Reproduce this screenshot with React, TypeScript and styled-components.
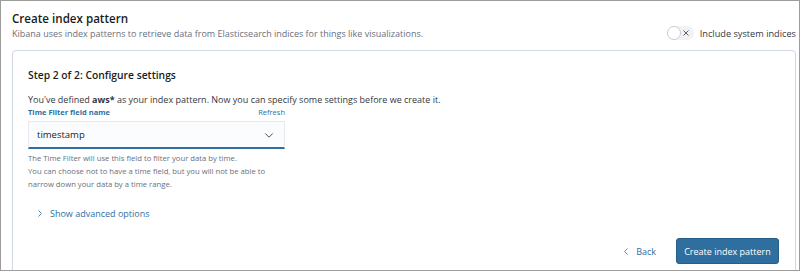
import styled, { createGlobalStyle } from "styled-components";

const GlobalStyle = createGlobalStyle`
  html, body {
    margin: 0;
    padding: 0;
    background: #ffffff;
  }
  body {
    font-family: "Open Sans", "Liberation Sans", sans-serif;
    color: #343741;
  }
`;

const ChevronDown = () => (
  <svg width="10" height="10" viewBox="0 0 16 16" fill="none">
    <path d="M2 5.5l6 6 6-6" stroke="#343741" strokeWidth="1.4" />
  </svg>
);

const ChevronSide = ({ left }: { left?: boolean }) => (
  <svg width="8" height="9" viewBox="0 0 16 16" fill="none">
    <path
      d={left ? "M11 2L5 8l6 6" : "M5 2l6 6-6 6"}
      stroke="#2f6f9f"
      strokeWidth="1.6"
    />
  </svg>
);

const CrossIcon = () => (
  <svg width="8" height="8" viewBox="0 0 16 16" fill="none">
    <path d="M3 3l10 10M13 3L3 13" stroke="#343741" strokeWidth="1.6" />
  </svg>
);

export default function App() {
  return (
    <>
      <GlobalStyle />
      <Frame>
        <Header>
          <div>
            <Title>Create index pattern</Title>
            <Subtitle>
              Kibana uses index patterns to retrieve data from Elasticsearch
              indices for things like visualizations.
            </Subtitle>
          </div>
          <SwitchRow>
            <Switch>
              <Knob />
              <CrossIcon />
            </Switch>
            <SwitchLabel>Include system indices</SwitchLabel>
          </SwitchRow>
        </Header>

        <Panel>
          <StepTitle>Step 2 of 2: Configure settings</StepTitle>
          <Description>
            You've defined <b>aws*</b> as your index pattern. Now you can
            specify some settings before we create it.
          </Description>
          <Field>
            <LabelRow>
              <FieldLabel>Time Filter field name</FieldLabel>
              <LinkText>Refresh</LinkText>
            </LabelRow>
            <Select>
              <span>timestamp</span>
              <ChevronDown />
            </Select>
            <HelpText>
              The Time Filter will use this field to filter your data by time.
              <br />
              You can choose not to have a time field, but you will not be able
              to
              <br />
              narrow down your data by a time range.
            </HelpText>
          </Field>
          <Advanced>
            <ChevronSide />
            Show advanced options
          </Advanced>
          <Actions>
            <BackButton>
              <ChevronSide left />
              Back
            </BackButton>
            <PrimaryButton>Create index pattern</PrimaryButton>
          </Actions>
        </Panel>
      </Frame>
    </>
  );
}

const Frame = styled.div`
  width: 800px;
  height: 271px;
  box-sizing: border-box;
  border: 1px solid #9c9c9c;
  padding: 10px 3px 0 11px;
  overflow: hidden;
`;

const Header = styled.div`
  display: flex;
  justify-content: space-between;
  align-items: flex-end;
  margin-bottom: 9px;
`;

const Title = styled.h1`
  margin: 0;
  font-size: 11.6px;
  font-weight: 600;
  line-height: 16px;
  color: #1a1c21;
`;

const Subtitle = styled.p`
  margin: 0;
  font-size: 9px;
  line-height: 14px;
  color: #69707d;
`;

const SwitchRow = styled.div`
  display: flex;
  align-items: center;
  gap: 6px;
  margin-bottom: 1px;
`;

const Switch = styled.div`
  width: 27px;
  height: 14px;
  border-radius: 8px;
  background: #f1f2f4;
  display: flex;
  align-items: center;
  justify-content: space-between;
  padding-right: 4px;
  box-sizing: border-box;
`;

const Knob = styled.div`
  width: 14px;
  height: 14px;
  border-radius: 50%;
  background: #fff;
  border: 1px solid #c9ced6;
  box-sizing: border-box;
`;

const SwitchLabel = styled.span`
  font-size: 9.2px;
  color: #343741;
`;

const Panel = styled.div`
  border: 1px solid #d3dae6;
  border-radius: 4px;
  box-shadow: 0 1px 2px rgba(0, 0, 0, 0.06);
  padding: 16px 15px 0;
  min-height: 260px;
  display: flex;
  flex-direction: column;
`;

const StepTitle = styled.h2`
  margin: 0;
  font-size: 10.3px;
  font-weight: 600;
  line-height: 16px;
  color: #1a1c21;
`;

const Description = styled.p`
  margin: 10px 0 0;
  font-size: 9px;
  line-height: 14px;
  color: #343741;

  b {
    font-weight: 700;
  }
`;

const Field = styled.div`
  width: 257px;
`;

const LabelRow = styled.div`
  display: flex;
  justify-content: space-between;
  align-items: center;
  margin-bottom: 4px;
`;

const FieldLabel = styled.span`
  font-size: 7.5px;
  font-weight: 700;
  color: #2f6f9f;
`;

const LinkText = styled.span`
  font-size: 7.5px;
  color: #2f6f9f;
`;

const Select = styled.div`
  height: 28px;
  box-sizing: border-box;
  background: #fbfcfd;
  border: 1px solid #e6e9ee;
  border-bottom: 2px solid #2f6f9f;
  display: flex;
  align-items: center;
  justify-content: space-between;
  padding: 0 10px 0 8px;
  font-size: 9.5px;
  color: #1a1c21;
`;

const HelpText = styled.p`
  margin: 3px 0 0;
  font-size: 7.7px;
  line-height: 13px;
  color: #69707d;
`;

const Advanced = styled.div`
  display: flex;
  align-items: center;
  gap: 6px;
  margin: 16px 0 0 8px;
  font-size: 9px;
  color: #2f6f9f;
`;

const Actions = styled.div`
  display: flex;
  justify-content: flex-end;
  align-items: center;
  gap: 20px;
  margin-top: 18px;
  padding-right: 1px;
`;

const BackButton = styled.span`
  display: flex;
  align-items: center;
  gap: 6px;
  font-size: 9px;
  color: #2f6f9f;
`;

const PrimaryButton = styled.div`
  width: 103px;
  height: 26px;
  border-radius: 3px;
  background: #2f6f9f;
  border: 1px solid #275d86;
  box-sizing: border-box;
  color: #ffffff;
  font-size: 9px;
  display: flex;
  align-items: center;
  justify-content: center;
`;
